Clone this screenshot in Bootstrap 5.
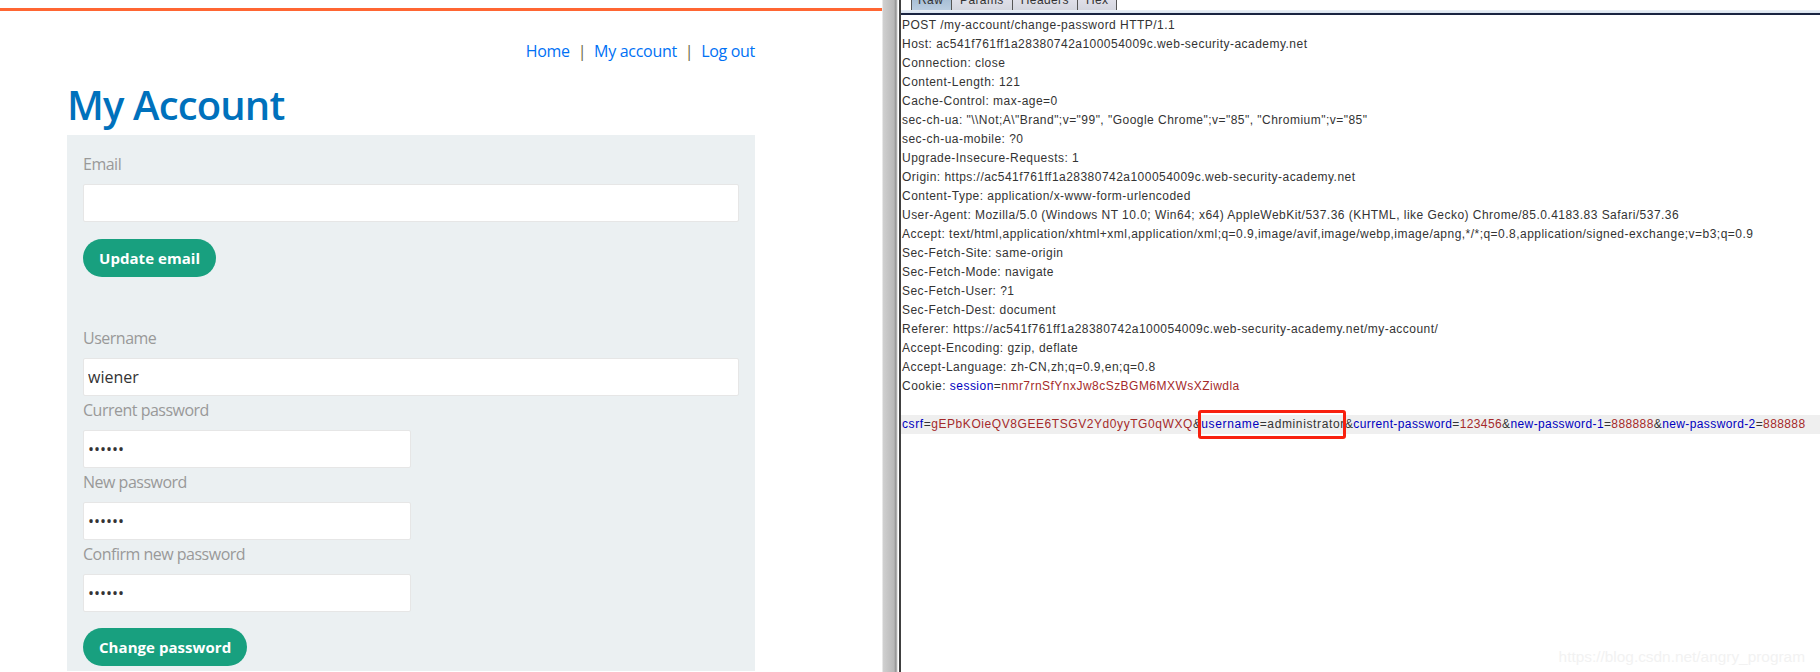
<!DOCTYPE html>
<html lang="en">
<head>
<meta charset="utf-8">
<title>Change password request</title>
<link href="https://cdn.jsdelivr.net/npm/bootstrap@5.3.0/dist/css/bootstrap.min.css" rel="stylesheet">
<style>
html,body{height:672px;overflow:hidden;background:#fff}
.shot{height:672px;overflow:hidden}
.lab-side{width:882px;flex:none;font-family:"Open Sans",sans-serif;font-size:16px;letter-spacing:-.5px;overflow:hidden}
.lab-bar{height:3px;margin-top:8px;background:#ff6633}
.lab-wrap{margin:0 127px 0 67px}
.lab-nav{height:32px;margin-top:24px;line-height:32px;color:#6b6a45;gap:8px}
.lab-nav a{color:#0071f5;text-decoration:none;letter-spacing:-.3px}
.lab-title{font-size:40px;font-weight:600;color:#0071bc;line-height:54px;margin:11px 0 0;letter-spacing:-.85px}
.lab-panel{background:#ebf0f2;padding:15px 16px 0;margin-top:3px;height:536px}
.lab-label{display:block;color:#999;line-height:28px;margin:0;height:26px}
.lab-label-far{margin-top:47px}
.lab-input{display:block;width:100%;height:38px;border:1px solid #e6e6e6;background:#fff;border-radius:2px;padding:0 4px;color:#333;font:inherit;margin-top:8px;outline:0}
.lab-short{width:328px}
.lab-btn{background:#18a07f;color:#fff;border:0;border-radius:20px;height:38px;padding:0 16px;font-weight:700;font-size:15px;line-height:38px;margin-top:16px;display:block;letter-spacing:.05px}
.lab-btn-first{margin-top:17px}
.split-bar{width:17px;flex:none;background:linear-gradient(90deg,#fff 0,#d0d0d0 1px,#b8b8b8 12px,#8f8f8f 14px,#ccc 15px,#fff 16px,#fff 17px)}
.req-side{flex:1;min-width:0;border-left:2px solid #404040;font-family:"Liberation Sans",sans-serif;font-size:12px;color:#333;position:relative}
.req-tabs{height:10px;padding-left:10px}
.req-tab{height:10px;overflow:hidden;border:1px solid #555;border-top:0;border-bottom:0;margin-right:-1px;background:linear-gradient(#dfdfe8,#d4d6df);padding:0 8px;line-height:0;letter-spacing:.4px}
.req-tab-on{background:linear-gradient(#a9c0d6,#bacde0);width:41px;padding:0 6px}
.req-rule{height:6px;background:linear-gradient(#eaf0f6 0,#d8e2ee 50%,#1a2440 50%,#1a2440 83%,#fff 83%)}
.req-line{height:19px;line-height:19px;padding-left:1px;letter-spacing:.47px;white-space:pre}
.req-hl{background:#efefef;letter-spacing:.39px}
.req-tok{letter-spacing:.57px}
.k{color:#0000c0}.v{color:#a52a2a}
.req-mark{position:relative;letter-spacing:.63px}
.req-mark::after{content:"";position:absolute;left:-3px;right:-1px;top:-7px;bottom:-8px;border:3px solid #f8200e;border-radius:3px}
.req-wm{position:absolute;right:15px;bottom:6px;color:#f2f2f2;font-size:15.4px;line-height:19px}
</style>
</head>
<body>
<div class="shot d-flex">
  <div class="lab-side">
    <div class="lab-bar"></div>
    <div class="lab-wrap">
      <div class="lab-nav d-flex justify-content-end">
        <a href="#">Home</a><span>|</span><a href="#">My account</a><span>|</span><a href="#">Log out</a>
      </div>
      <h1 class="lab-title">My Account</h1>
      <div class="lab-panel">
        <label class="lab-label">Email</label>
        <input class="lab-input" type="text">
        <button class="lab-btn lab-btn-first" type="button">Update email</button>
        <label class="lab-label lab-label-far">Username</label>
        <input class="lab-input" type="text" value="wiener">
        <label class="lab-label">Current password</label>
        <input class="lab-input lab-short" type="password" value="123456">
        <label class="lab-label">New password</label>
        <input class="lab-input lab-short" type="password" value="888888">
        <label class="lab-label">Confirm new password</label>
        <input class="lab-input lab-short" type="password" value="888888">
        <button class="lab-btn" type="button">Change password</button>
      </div>
    </div>
  </div>
  <div class="split-bar"></div>
  <div class="req-side">
    <div class="req-tabs d-flex">
      <div class="req-tab req-tab-on">Raw</div><div class="req-tab">Params</div><div class="req-tab">Headers</div><div class="req-tab">Hex</div>
    </div>
    <div class="req-rule"></div>
    <div class="req-line">POST /my-account/change-password HTTP/1.1</div>
    <div class="req-line">Host: ac541f761ff1a28380742a100054009c.web-security-academy.net</div>
    <div class="req-line">Connection: close</div>
    <div class="req-line">Content-Length: 121</div>
    <div class="req-line">Cache-Control: max-age=0</div>
    <div class="req-line">sec-ch-ua: "\\Not;A\"Brand";v="99", "Google Chrome";v="85", "Chromium";v="85"</div>
    <div class="req-line">sec-ch-ua-mobile: ?0</div>
    <div class="req-line">Upgrade-Insecure-Requests: 1</div>
    <div class="req-line">Origin: https://ac541f761ff1a28380742a100054009c.web-security-academy.net</div>
    <div class="req-line">Content-Type: application/x-www-form-urlencoded</div>
    <div class="req-line">User-Agent: Mozilla/5.0 (Windows NT 10.0; Win64; x64) AppleWebKit/537.36 (KHTML, like Gecko) Chrome/85.0.4183.83 Safari/537.36</div>
    <div class="req-line">Accept: text/html,application/xhtml+xml,application/xml;q=0.9,image/avif,image/webp,image/apng,*/*;q=0.8,application/signed-exchange;v=b3;q=0.9</div>
    <div class="req-line">Sec-Fetch-Site: same-origin</div>
    <div class="req-line">Sec-Fetch-Mode: navigate</div>
    <div class="req-line">Sec-Fetch-User: ?1</div>
    <div class="req-line">Sec-Fetch-Dest: document</div>
    <div class="req-line">Referer: https://ac541f761ff1a28380742a100054009c.web-security-academy.net/my-account/</div>
    <div class="req-line">Accept-Encoding: gzip, deflate</div>
    <div class="req-line">Accept-Language: zh-CN,zh;q=0.9,en;q=0.8</div>
    <div class="req-line">Cookie: <span class="k">session</span>=<span class="v">nmr7rnSfYnxJw8cSzBGM6MXWsXZiwdla</span></div>
    <div class="req-line"></div>
    <div class="req-line req-hl"><span class="req-tok"><span class="k">csrf</span>=<span class="v">gEPbKOieQV8GEE6TSGV2Yd0yyTG0qWXQ</span></span>&amp;<span class="req-mark"><span class="k">username</span>=administrator</span>&amp;<span class="k">current-password</span>=<span class="v">123456</span>&amp;<span class="k">new-password-1</span>=<span class="v">888888</span>&amp;<span class="k">new-password-2</span>=<span class="v">888888</span></div>
    <div class="req-wm">https://blog.csdn.net/angry_program</div>
  </div>
</div>
<script src="https://cdn.jsdelivr.net/npm/bootstrap@5.3.0/dist/js/bootstrap.bundle.min.js"></script>
</body>
</html>
